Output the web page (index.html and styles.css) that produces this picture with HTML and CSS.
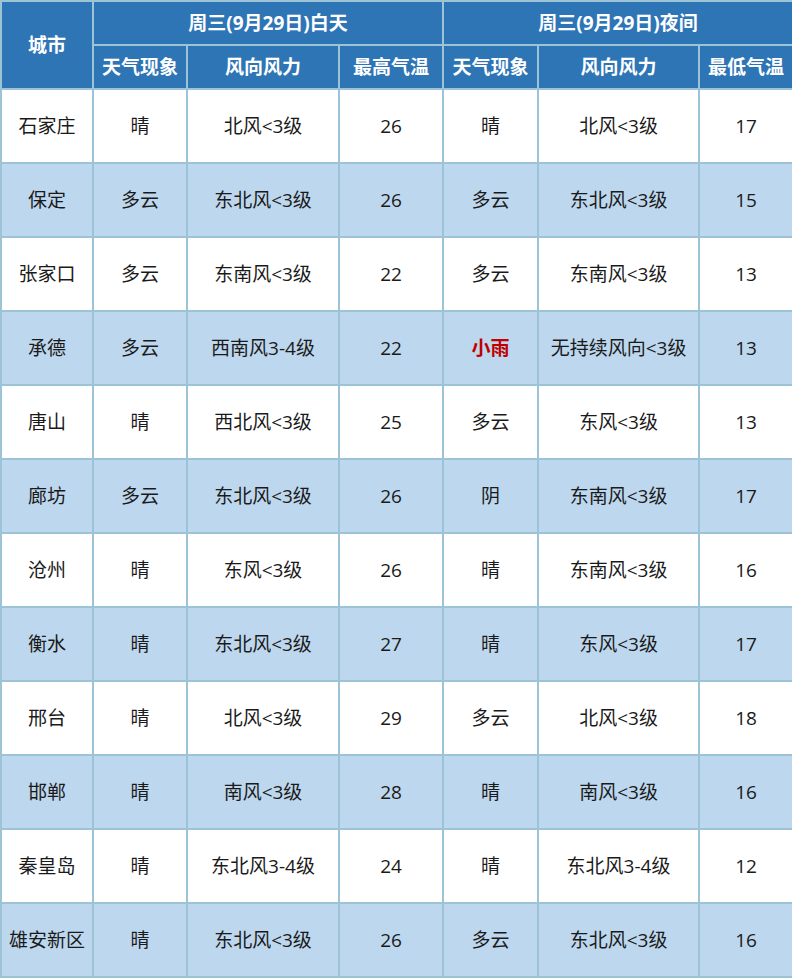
FILE: index.html
```html
<!DOCTYPE html>
<html lang="zh">
<head>
<meta charset="utf-8">
<link rel="stylesheet" href="styles.css">
</head>
<body>
<table class="wx">
<colgroup>
<col class="c1"><col class="c2"><col class="c3"><col class="c4"><col class="c5"><col class="c6"><col class="c7">
</colgroup>
<thead>
<tr class="h1">
<th rowspan="2">城市</th>
<th colspan="3">周三(9月29日)白天</th>
<th colspan="3">周三(9月29日)夜间</th>
</tr>
<tr class="h2">
<th>天气现象</th><th>风向风力</th><th>最高气温</th>
<th>天气现象</th><th>风向风力</th><th>最低气温</th>
</tr>
</thead>
<tbody>
<tr><td>石家庄</td><td>晴</td><td>北风&lt;3级</td><td>26</td><td>晴</td><td>北风&lt;3级</td><td>17</td></tr>
<tr class="alt"><td>保定</td><td>多云</td><td>东北风&lt;3级</td><td>26</td><td>多云</td><td>东北风&lt;3级</td><td>15</td></tr>
<tr><td>张家口</td><td>多云</td><td>东南风&lt;3级</td><td>22</td><td>多云</td><td>东南风&lt;3级</td><td>13</td></tr>
<tr class="alt"><td>承德</td><td>多云</td><td>西南风3-4级</td><td>22</td><td class="rain">小雨</td><td>无持续风向&lt;3级</td><td>13</td></tr>
<tr><td>唐山</td><td>晴</td><td>西北风&lt;3级</td><td>25</td><td>多云</td><td>东风&lt;3级</td><td>13</td></tr>
<tr class="alt"><td>廊坊</td><td>多云</td><td>东北风&lt;3级</td><td>26</td><td>阴</td><td>东南风&lt;3级</td><td>17</td></tr>
<tr><td>沧州</td><td>晴</td><td>东风&lt;3级</td><td>26</td><td>晴</td><td>东南风&lt;3级</td><td>16</td></tr>
<tr class="alt"><td>衡水</td><td>晴</td><td>东北风&lt;3级</td><td>27</td><td>晴</td><td>东风&lt;3级</td><td>17</td></tr>
<tr><td>邢台</td><td>晴</td><td>北风&lt;3级</td><td>29</td><td>多云</td><td>北风&lt;3级</td><td>18</td></tr>
<tr class="alt"><td>邯郸</td><td>晴</td><td>南风&lt;3级</td><td>28</td><td>晴</td><td>南风&lt;3级</td><td>16</td></tr>
<tr><td>秦皇岛</td><td>晴</td><td>东北风3-4级</td><td>24</td><td>晴</td><td>东北风3-4级</td><td>12</td></tr>
<tr class="alt"><td>雄安新区</td><td>晴</td><td>东北风&lt;3级</td><td>26</td><td>多云</td><td>东北风&lt;3级</td><td>16</td></tr>
</tbody>
</table>
</body>
</html>
```
FILE: styles.css
```css
html, body {
  margin: 0;
  padding: 0;
  background: #ffffff;
}
body {
  font-family: "Open Sans", "Noto Sans CJK SC", sans-serif;
  color: #1a1a1a;
}
.wx {
  width: 792px;
  table-layout: fixed;
  border-collapse: collapse;
  border: 1px solid #9dc3d6;
}
.c1 { width: 92px; }
.c2 { width: 94px; }
.c3 { width: 152px; }
.c4 { width: 104px; }
.c5 { width: 95px; }
.c6 { width: 161px; }
.c7 { width: 94px; }
.wx th, .wx td {
  border: 2px solid #9dc3d6;
  text-align: center;
  vertical-align: middle;
  padding: 0;
  font-size: 19px;
  line-height: 1.2;
  white-space: nowrap;
}
.wx th {
  background: #2e75b6;
  color: #ffffff;
  font-weight: 700;
}
.h1 th { height: 42px; }
.h2 th { height: 42px; }
.wx td {
  height: 72px;
  font-weight: 400;
}
.alt td { background: #bdd7ee; }
.wx td.rain {
  color: #c00000;
  font-weight: 700;
}
```
